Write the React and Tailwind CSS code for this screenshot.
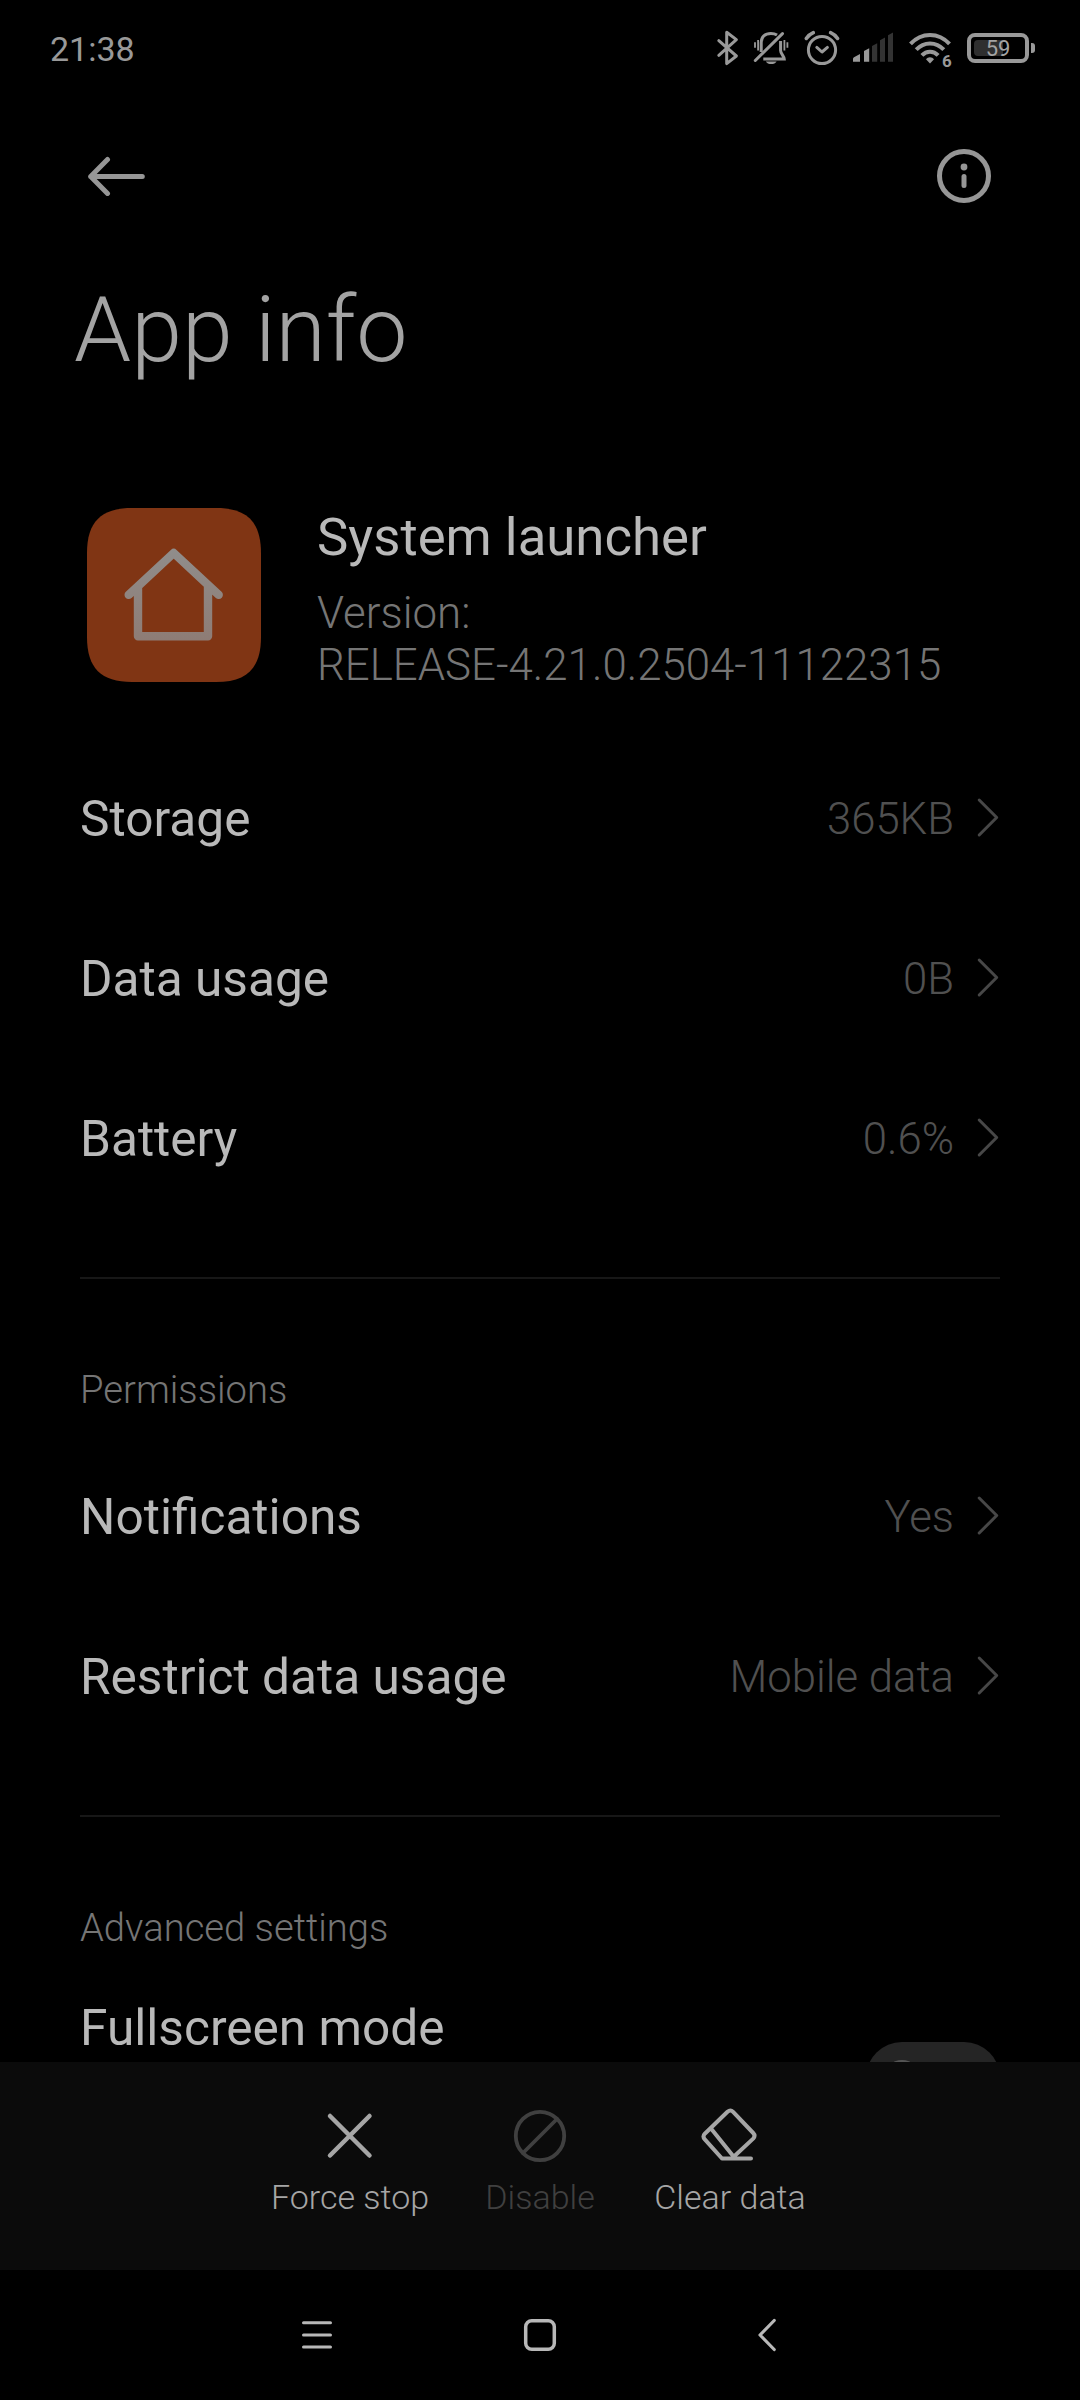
import React from "react";

const usageItems = [
  { label: "Storage", value: "365KB" },
  { label: "Data usage", value: "0B" },
  { label: "Battery", value: "0.6%" },
];

const permissionItems = [
  { label: "Notifications", value: "Yes" },
  { label: "Restrict data usage", value: "Mobile data" },
];

function StatusBar() {
  return (
    <div className="flex h-24 shrink-0 items-center pl-[50px] pr-[45px] text-[#999999]">
      <span className="mt-[2px] text-[34px] leading-10">21:38</span>
      <div className="ml-auto flex items-center">
        {/* Bluetooth */}
        <svg width="24" height="40" viewBox="0 0 24 40" fill="none" stroke="currentColor" strokeWidth="3" strokeLinejoin="round" strokeLinecap="round">
          <path d="M2.8 12.7 20.4 28l-9.7 7.6V4.2l9.7 7.4L2.8 27.3" />
        </svg>
        {/* Muted bell */}
        <svg className="ml-[10px]" width="40" height="40" viewBox="0 0 40 40" fill="none" stroke="currentColor" strokeWidth="3">
          <path d="M5.3 32.5 32.5 5.6" strokeLinecap="round" />
          <path d="M11.2 24V14.8C11.2 8.8 15 5.4 20.9 5.4c2.4 0 4.5.6 6.1 1.7" />
          <path d="M30.6 13v9.5c0 3.2 3.2 5.2 3.6 8.4H13.3" />
          <path d="M15.8 33.4h10.8c-1.6 3.4-9.2 3.4-10.8 0z" fill="currentColor" stroke="none" />
          <path d="M5 14.3v5.4M8.1 12v10.6M34.4 12v10.6M37.4 14.3v5.4" strokeWidth="1.8" />
        </svg>
        {/* Alarm */}
        <svg className="ml-[11px]" width="40" height="40" viewBox="0 0 40 40" fill="none" stroke="currentColor" strokeLinecap="round" strokeLinejoin="round">
          <circle cx="21" cy="22" r="13.6" strokeWidth="3" />
          <path d="m15.8 19.4 5.2 4.6 5.4-4.6" strokeWidth="3" />
          <path d="M5.3 10.4c1.8-2.6 4.2-4.6 7-5.8M36.6 10.4c-1.8-2.6-4.2-4.6-7-5.8" strokeWidth="3.6" />
        </svg>
        {/* Signal */}
        <svg className="ml-[10px]" width="44" height="40" viewBox="0 0 44 40" fill="currentColor">
          <path d="M2 33.7v-2.9q0-1 1-1.5l6-3.3v7.7zM13 33.7V23l5.2-2.7v13.4z" />
          <path d="M21 33.7V18l5.2-2.7v18.4zM29 33.7V12.3l5-2.7v24.1zM37 33.7V7.3l5-2.7v29.1z" fill="#333333" />
        </svg>
        {/* Wi-Fi 6 */}
        <svg className="-mb-2 ml-3" width="48" height="48" viewBox="0 0 48 48" fill="none" stroke="currentColor" strokeWidth="4">
          <path d="M3.5 15.8C14.5 3.9 31.5 3.9 42.5 15.8M9.2 21.6C17 13.3 29 13.3 36.8 21.6M14.9 27.3c4.6-4.9 11.6-4.9 16.2 0" />
          <path d="M19 31.2c1.8-2.7 6.2-2.7 8 0l-4 4.3z" fill="currentColor" stroke="none" />
          <text x="35" y="38.7" fontSize="17" fontWeight="700" fill="currentColor" stroke="none">6</text>
        </svg>
        {/* Battery */}
        <div className="relative ml-3 flex h-[30px] w-[62px] items-center rounded-[8px] border-4 border-[#999999]">
          <div className="ml-[3px] h-4 w-[29px] rounded-l-[4px] bg-[#2f2f2f]" />
          <span className="absolute inset-0 text-center text-[22px] leading-6 text-[#a3a3a3]">59</span>
        </div>
        <div className="ml-[2px] h-[10px] w-[4px] rounded-r-[3px] bg-[#999999]" />
      </div>
    </div>
  );
}

function TopBar() {
  return (
    <div className="flex h-40 shrink-0 items-center justify-between pl-[86px] pr-[87px] text-[#969696]">
      <svg width="60" height="40" viewBox="0 0 60 40" fill="none" stroke="currentColor" strokeWidth="5" strokeLinecap="round" strokeLinejoin="round">
        <path d="M21.5 3.5 4.7 20.5l16.8 17M4.7 20.5h51.6" />
      </svg>
      <svg width="58" height="56" viewBox="0 0 58 56" fill="none" stroke="currentColor" strokeWidth="5" strokeLinecap="round">
        <circle cx="29" cy="28" r="24.5" />
        <circle cx="29" cy="19" r="3.4" fill="currentColor" stroke="none" />
        <path d="M29 28.5v9" />
      </svg>
    </div>
  );
}

function HomeIcon() {
  return (
    <svg width="174" height="174" viewBox="0 0 174 174" fill="none">
      <defs>
        <linearGradient id="house" x1="0" y1="41" x2="0" y2="133" gradientUnits="userSpaceOnUse">
          <stop offset="0" stopColor="#908d8b" />
          <stop offset="1" stopColor="#8e7c75" />
        </linearGradient>
      </defs>
      <path d="M45 0h84C160 0 174 14 174 45v84c0 31-14 45-45 45H45C14 174 0 160 0 129V45C0 14 14 0 45 0z" fill="#803514" />
      <path
        d="M41.7 86.8 86.7 45l45 41.8M51 79v49.3h70V79"
        stroke="url(#house)"
        strokeWidth="8.4"
        strokeLinecap="round"
        strokeLinejoin="round"
      />
    </svg>
  );
}

function Row({ label, value }) {
  return (
    <div className="flex h-40 items-center">
      <span className="text-[49.6px] text-[#b9b9b9]">{label}</span>
      <span className="ml-auto mt-[2px] text-[43.7px] font-light text-[#505050]">{value}</span>
      <svg className="-mt-[2px] ml-[22px]" width="24" height="42" viewBox="0 0 24 42" fill="none" stroke="#474747" strokeWidth="3" strokeLinecap="round" strokeLinejoin="round">
        <path d="m3.2 3 17.5 17.5L3.2 38" />
      </svg>
    </div>
  );
}

function Section({ title, children }) {
  return (
    <section>
      <div className="mt-[58px] h-[2px] bg-[#171717]" />
      <h2 className="flex h-[158px] items-end pb-[24px] text-[38.2px] font-light leading-[45px] text-[#757575]">{title}</h2>
      {children}
    </section>
  );
}

function Action({ label, disabled, children }) {
  return (
    <button
      disabled={disabled}
      className={`flex w-[190px] flex-col items-center pt-[44px] ${disabled ? "text-[#404040]" : "text-[#a6a6a6]"}`}
    >
      <svg width="60" height="60" viewBox="0 0 60 60" fill="none" stroke="currentColor" strokeLinecap="round" strokeLinejoin="round">
        {children}
      </svg>
      <span className="mt-[11px] whitespace-nowrap text-[34px] font-light leading-10">{label}</span>
    </button>
  );
}

function ActionBar() {
  return (
    <div className="flex h-[208px] shrink-0 justify-center bg-[#0b0b0b]">
      <Action label="Force stop">
        <path d="m10 10 39.5 39.5M49.5 10 10 49.5" strokeWidth="4.5" />
      </Action>
      <Action label="Disable" disabled>
        <circle cx="30" cy="30" r="24.2" strokeWidth="3.8" />
        <path d="m13 47 34-34" strokeWidth="3.8" />
      </Action>
      <Action label="Clear data">
        <path
          d="M22 52.5 4.8 33.3q-2.6-2.9 0-5.6L27.5 5.8q3-2.6 5.6 0L53.2 27q2.6 2.8 0 5.6L34 50.5M11 22.5l22.5 28M22 52.5h29"
          strokeWidth="4"
        />
      </Action>
    </div>
  );
}

function NavBar() {
  return (
    <div className="flex h-[130px] shrink-0 items-center justify-between px-[297px] text-[#b8b8b8]">
      <svg width="40" height="40" viewBox="0 0 40 40" fill="none" stroke="currentColor" strokeWidth="3" strokeLinecap="round">
        <path d="M6.5 7.7h27M6.5 20h27M6.5 32h27" />
      </svg>
      <svg width="40" height="40" viewBox="0 0 40 40" fill="none" stroke="currentColor" strokeWidth="3.5">
        <rect x="5.7" y="5.7" width="28.6" height="28.6" rx="6" />
      </svg>
      <svg width="40" height="40" viewBox="0 0 40 40" fill="none" stroke="currentColor" strokeWidth="3.2" strokeLinecap="round" strokeLinejoin="round">
        <path d="M31.2 5.5 17 20l14.2 14.5" />
      </svg>
    </div>
  );
}

export default function App() {
  return (
    <div className="flex h-[2400px] w-[1080px] flex-col overflow-hidden bg-black font-[Roboto,sans-serif]">
      <StatusBar />
      <TopBar />
      <h1 className="mt-[20px] shrink-0 pl-[74px] text-[91.5px] font-light leading-[108px] text-[#a3a3a3]">App info</h1>

      <main className="min-h-0 flex-1 overflow-hidden px-20">
        <div className="flex h-[355px] pl-[7px] pt-[124px]">
          <HomeIcon />
          <div className="ml-14">
            <p className="-mt-px text-[52.7px] leading-[60px] text-[#b9b9b9]">System launcher</p>
            <p className="mt-[20px] text-[43.8px] font-light leading-[52px] text-[#757575]">
              Version:
              <br />
              RELEASE-4.21.0.2504-11122315
            </p>
          </div>
        </div>

        {usageItems.map((item) => (
          <Row key={item.label} {...item} />
        ))}

        <Section title="Permissions">
          {permissionItems.map((item) => (
            <Row key={item.label} {...item} />
          ))}
        </Section>

        <Section title="Advanced settings">
          <div className="flex justify-between pt-[23px]">
            <span className="text-[49.6px] leading-[60px] text-[#b9b9b9]">Fullscreen mode</span>
            <div className="mt-[44px] h-[72px] w-[134px] rounded-full bg-[#252525] pl-[18px] pt-[18px]">
              <div className="h-9 w-9 rounded-full bg-[#555555]" />
            </div>
          </div>
        </Section>
      </main>

      <ActionBar />
      <NavBar />
    </div>
  );
}
